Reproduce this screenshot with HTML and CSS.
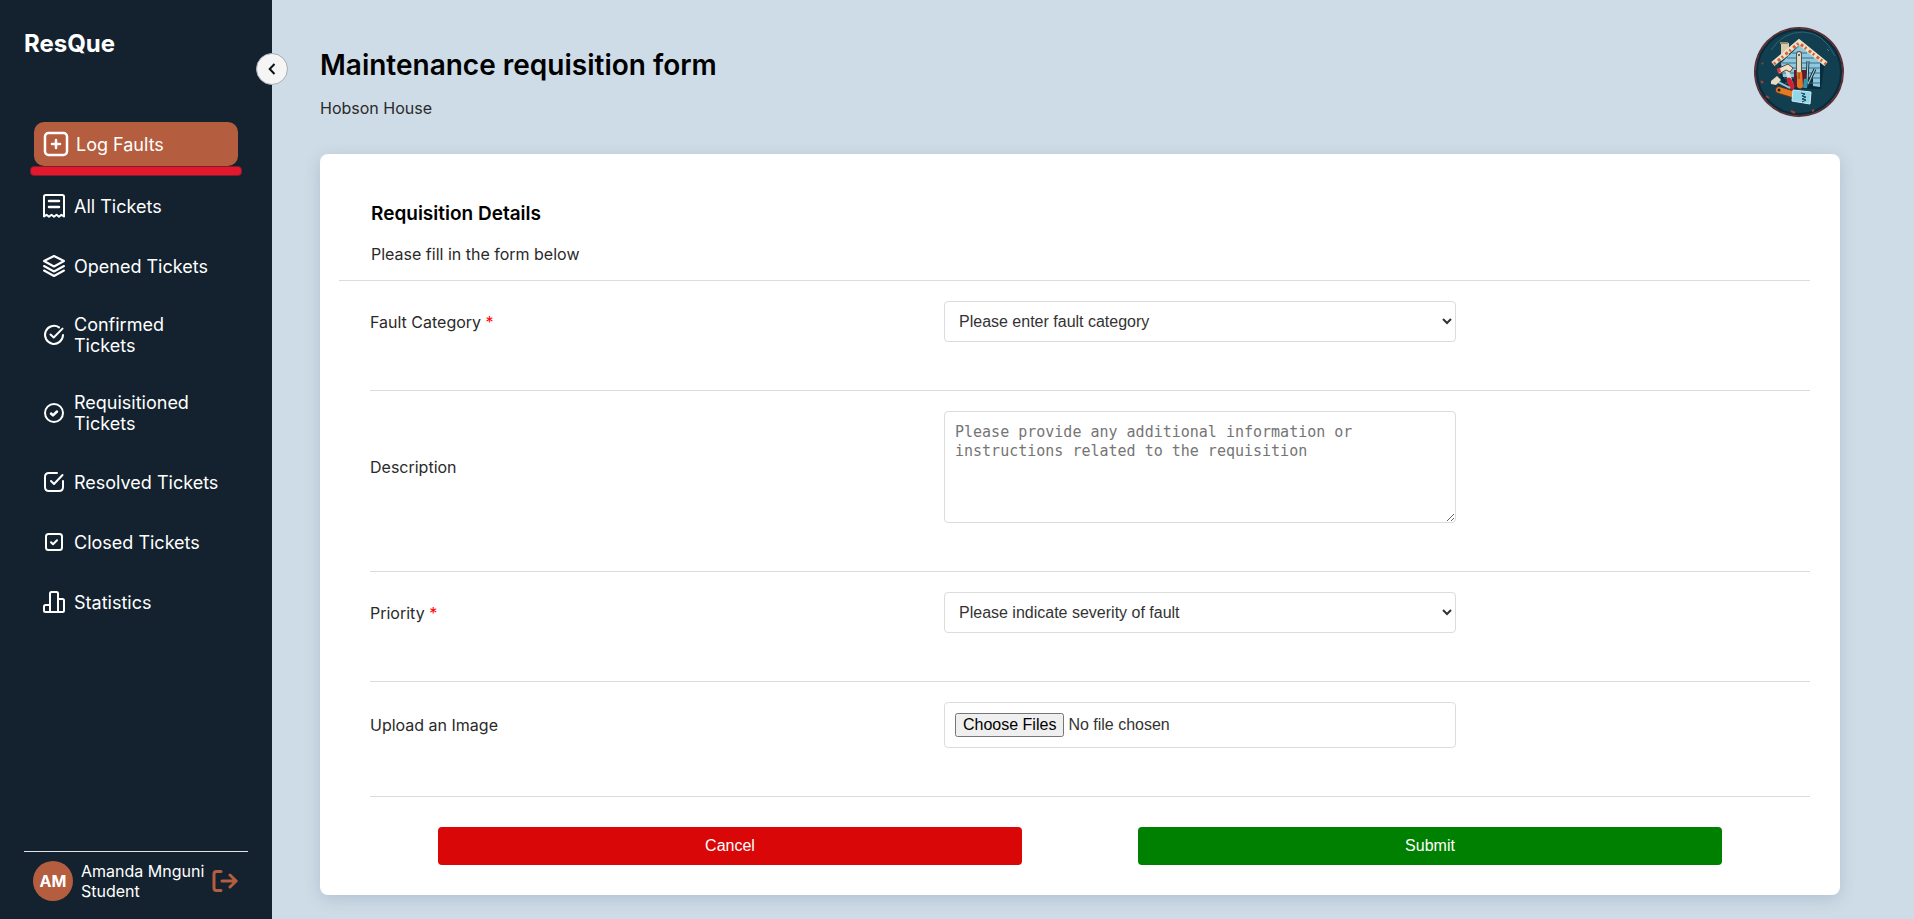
FILE: index.html
```html
<!DOCTYPE html>
<html lang="en">
<head>
<meta charset="utf-8">
<title>ResQue - Maintenance requisition form</title>
<link rel="stylesheet" href="styles.css">
</head>
<body>
<div class="app">
  <aside class="sidebar">
    <div class="brand">ResQue</div>
    <button class="collapse" type="button" aria-label="Collapse sidebar">
      <svg width="16" height="16" viewBox="0 0 16 16" fill="none" stroke="currentColor" stroke-width="2"><path d="M10.500 3 5.700 8l4.800 5"/></svg>
    </button>
    <nav class="nav">
      <a class="nav-item active" href="#">
        <svg class="icon-large" viewBox="0 0 28 28"><rect x="3" y="3" width="22" height="22" rx="3.500"/><path d="M14 10v8M10 14h8"/></svg>
        <span>Log Faults</span>
      </a>
      <a class="nav-item" href="#">
        <svg viewBox="0 0 24 24"><path d="M2 22.500V2.800Q2 1 3.800 1h16.400Q22 1 22 2.800v19.700l-2.500-1.700L17 22.700l-2.500-1.900-2.500 1.900-2.500-1.900L7 22.700l-2.500-1.900z"/><path d="M7 7h10M7 13h10" stroke-width="2.500"/></svg>
        <span>All Tickets</span>
      </a>
      <a class="nav-item" href="#">
        <svg viewBox="0 0 24 24"><path d="M12 2 22 7l-10 5.500L2 7z"/><path d="m2 12 10 5.500L22 12M2 16.500 12 22l10-5.500"/></svg>
        <span>Opened Tickets</span>
      </a>
      <a class="nav-item" href="#">
        <svg viewBox="0 0 24 24"><path d="M17 4.400A9 9 0 1 0 21 12"/><path d="m8.500 11.500 3.200 3L20.500 5.600"/></svg>
        <span>Confirmed Tickets</span>
      </a>
      <a class="nav-item" href="#">
        <svg viewBox="0 0 24 24"><circle cx="12" cy="12" r="9"/><path d="m9 12.500 2 1.900 4-3.900" stroke-width="2.500"/></svg>
        <span>Requisitioned Tickets</span>
      </a>
      <a class="nav-item" href="#">
        <svg viewBox="0 0 24 24"><path d="M15 3H7Q3 3 3 7v10q0 4 4 4h10q4 0 4-4v-6"/><path d="m9 11 3 3 8.500-9"/></svg>
        <span>Resolved Tickets</span>
      </a>
      <a class="nav-item" href="#">
        <svg viewBox="0 0 24 24"><rect x="4" y="4" width="16" height="16" rx="2.500"/><path d="m9 12.300 2 2 4-4"/></svg>
        <span>Closed Tickets</span>
      </a>
      <a class="nav-item" href="#">
        <svg viewBox="0 0 24 24"><path d="M8 22V3.500Q8 2 9.500 2h5Q16 2 16 3.500V22M16 9h4.500Q22 9 22 10.500v10q0 1.500-1.500 1.500h-17Q2 22 2 20.500v-4Q2 15 3.500 15H8"/></svg>
        <span>Statistics</span>
      </a>
    </nav>
    <div class="account">
      <span class="avatar">AM</span>
      <span class="who">Amanda Mnguni<br>Student</span>
      <button class="logout" type="button" aria-label="Log out">
        <svg width="26" height="24" viewBox="1 0 26 24" fill="none" stroke="currentColor" stroke-width="3" stroke-linecap="round" stroke-linejoin="round"><path d="M10 2.500H5.500Q3 2.500 3 5v14q0 2.500 2.500 2.500H10M11 12h14M19 6l6.200 6-6.200 6"/></svg>
      </button>
    </div>
  </aside>

  <main class="main">
    <header class="page-head">
      <div>
        <h1>Maintenance requisition form</h1>
        <p>Hobson House</p>
      </div>
      <svg class="badge" viewBox="0 0 92 92" role="img" aria-label="House of tools logo">
        <circle cx="46" cy="46" r="45" fill="#542f36"/>
        <circle cx="46" cy="46" r="43.500" fill="none" stroke="#783b3a" stroke-width="1" stroke-dasharray="9 3 4 7"/>
        <circle cx="46" cy="46" r="42" fill="#123f50" stroke="#092b3b" stroke-width="2"/>
        <path d="M18 24Q30 6 50 6T82 30" fill="none" stroke="#2a6477" stroke-width="1"/>
        <path d="M25 42 47 22l24 18-3 23H31z" fill="#082c3c"/>
        <path d="M28 17h8v12l-8 6z" fill="#d7cba9"/><path d="M27 17h8" stroke="#9c8b6d" stroke-width="2"/>
        <path d="m28 37 19-18 20 17v25l-7-1v-9H30z" fill="#8dc8de"/>
        <path d="M39 27h15M34 32h27M29 37h38M28 42h39M28 47h39M31 52h36M32 57h35" stroke="#386f86" stroke-width="1"/>
        <path d="M41 44h12v17H41z" fill="#65182b"/>
        <path d="M20 38 46 16l27 22" fill="none" stroke="#ece1ca" stroke-width="5"/>
        <path d="m21 38 25-21 27 21" fill="none" stroke="#d86137" stroke-width="3" stroke-dasharray="2 3 3 2"/>
        <path d="M46 28v20" stroke="#574e46" stroke-width="6" stroke-linecap="round"/>
        <path d="M46 28v20" stroke="#e1dcc4" stroke-width="4" stroke-linecap="round"/><circle cx="46" cy="29" r="1" fill="#344"/>
        <path d="M44 46h5l1 15q-3 3-6 0z" fill="#e27622"/><path d="M46 47v6" stroke="#75401c" stroke-width="1"/>
        <path d="m55 35-1 21M62 43l-8 17" stroke="#183b4c" stroke-width="3"/><path d="m55 35-1 22M62 43l-7 15" stroke="#c4d3cf" stroke-width="1"/>
        <path d="m53 53-1 9" stroke="#3295b2" stroke-width="4"/>
        <path d="m34 44 5 17" stroke="#d4dfd5" stroke-width="4"/><path d="m36 54 3 7" stroke="#d11f35" stroke-width="5" stroke-linecap="round"/>
        <path d="m24 43 11-5 5 4-3 4-4-2-7 4z" fill="#eee1c8" stroke="#664238" stroke-width="1"/><path d="m24 43 3-1 1 4-3 1z" fill="#e03540"/>
        <path d="m25 56 12 6" stroke="#8cc3d2" stroke-width="2"/><path d="m18 55 6-5 4 4-5 5-5-1z" fill="#e8dbc1"/>
        <path d="m26 64 13 4" stroke="#573629" stroke-width="8" stroke-linecap="round"/><path d="m26 64 13 4" stroke="#e47b22" stroke-width="6" stroke-linecap="round"/><circle cx="26" cy="64" r="1.500" fill="#123"/>
        <path d="m40 64 18 2-1 12-18-3z" fill="#91d6e9" stroke="#d3edef" stroke-width="1"/><path d="m48 67 4 1-3 2 4 1-4 2 4 1-4 2" fill="none" stroke="#15394c" stroke-width="1"/>
        <path d="m9 37 1 1M8 55l2 2M13 70l3 2M38 85l4 2M59 85l2-1" stroke="#a34131" stroke-width="2"/><path d="m74 23 2 2" stroke="#44859a"/>
      </svg>
    </header>

    <form class="card">
      <div class="card-head">
        <h2>Requisition Details</h2>
        <p>Please fill in the form below</p>
      </div>
      <div class="rows">
        <div class="row">
          <label for="category">Fault Category <span class="required">*</span></label>
          <select id="category" class="control"><option>Please enter fault category</option></select>
        </div>
        <div class="row">
          <label for="description">Description</label>
          <textarea id="description" class="control" placeholder="Please provide any additional information or instructions related to the requisition"></textarea>
        </div>
        <div class="row">
          <label for="priority">Priority <span class="required">*</span></label>
          <select id="priority" class="control"><option>Please indicate severity of fault</option></select>
        </div>
        <div class="row">
          <label for="images">Upload an Image</label>
          <input id="images" class="control" type="file" multiple>
        </div>
      </div>
      <div class="actions">
        <button class="btn cancel" type="button">Cancel</button>
        <button class="btn submit" type="submit">Submit</button>
      </div>
    </form>
  </main>
</div>
</body>
</html>
```

FILE: styles.css
```css
* { box-sizing: border-box; }
body {
  margin: 0;
  background: #cedce7;
  color: #2a2a2a;
  font: 16px/20px Inter, sans-serif;
}
h1, h2, p { margin: 0; }
.app { display: flex; min-height: 100vh; }

.sidebar {
  position: relative;
  display: flex;
  flex-direction: column;
  flex: 0 0 272px;
  min-width: 0;
  padding: 28px 24px 18px;
  background: #13222e;
  color: #fff;
}
.brand { font-size: 24px; line-height: 32px; font-weight: 700; }
.collapse {
  position: absolute;
  top: 53px;
  right: -16px;
  display: grid;
  place-items: center;
  width: 32px;
  height: 32px;
  padding: 0;
  border: 1px solid #a9adb2;
  border-radius: 50%;
  background: #f5f5f5;
  color: #111;
}
.nav {
  display: flex;
  flex-direction: column;
  gap: 16px;
  margin: 62px 10px 0;
}
.nav-item {
  display: flex;
  align-items: center;
  gap: 8px;
  padding: 10px 8px;
  border-radius: 10px;
  color: #fff;
  font-size: 18px;
  line-height: 21px;
  text-decoration: none;
}
.nav-item svg {
  flex: none;
  width: 24px;
  height: 24px;
  fill: none;
  stroke: currentColor;
  stroke-width: 2;
  stroke-linecap: round;
  stroke-linejoin: round;
}
.nav-item.active {
  position: relative;
  gap: 6px;
  margin-bottom: 2px;
  padding: 8px;
  background: #b55d3f;
}
.nav-item .icon-large { width: 28px; height: 28px; stroke-width: 2.5; }
.nav-item.active::after {
  content: "";
  position: absolute;
  top: 100%;
  left: -4px;
  right: -4px;
  height: 8px;
  border: 1px solid #7d1e2e;
  border-radius: 4px;
  background: #e4182c;
}
.account {
  display: flex;
  align-items: center;
  margin-top: auto;
  padding: 9px 10px 0 9px;
  border-top: 1px solid #dfe3e6;
}
.avatar {
  display: grid;
  place-items: center;
  flex: 0 0 40px;
  height: 40px;
  margin-right: 8px;
  border-radius: 50%;
  background: #b55d3f;
  font-weight: 700;
}
.who { flex: none; white-space: nowrap; }
.logout {
  display: flex;
  margin-left: auto;
  padding: 0;
  border: 0;
  background: none;
  color: #b55d3f;
}

.main { flex: 1; min-width: 0; }
.page-head {
  display: flex;
  justify-content: space-between;
  align-items: flex-start;
  padding: 26px 69px 36px 48px;
}
.page-head h1 {
  margin-top: 21px;
  color: #000;
  font-size: 28px;
  line-height: 36px;
  font-weight: 600;
}
.page-head p { margin-top: 15px; }
.badge { width: 92px; height: 92px; }

.card {
  margin: 0 74px 24px 48px;
  padding: 46px 30px 30px 19px;
  border-radius: 8px;
  background: #fff;
  box-shadow: 0 4px 16px rgba(60, 90, 120, 0.2);
}
.card-head {
  padding: 0 0 16px 32px;
  border-bottom: 1px solid #dcdcdc;
}
.card-head h2 {
  color: #000;
  font-size: 19px;
  line-height: 28px;
  font-weight: 600;
}
.card-head p { margin-top: 16px; }
.rows { margin-left: 31px; }
.row {
  display: grid;
  grid-template-columns: calc(40% - 2px) minmax(0, 512px);
  align-items: center;
  padding: 20px 0 48px;
  border-bottom: 1px solid #dcdcdc;
}
.required { color: #f00; }
.control {
  display: block;
  width: 100%;
  border: 1px solid #dcdcdc;
  border-radius: 4px;
  background: #fff;
  color: #333;
  font: 16px/20px "Liberation Sans", Arial, sans-serif;
}
select.control { height: 41px; padding: 10px; }
textarea.control {
  height: 112px;
  padding: 11px 10px;
  font: 15px/19px "DejaVu Sans Mono", monospace;
  resize: both;
}
textarea.control::placeholder { color: #757575; }
input.control { height: 46px; padding: 10px; }
.actions {
  display: flex;
  justify-content: space-around;
  margin: 30px 30px 0 41px;
}
.btn {
  width: 584px;
  max-width: 48%;
  height: 38px;
  padding: 0;
  border: 0;
  border-radius: 4px;
  color: #fff;
  font: 16px/20px "Liberation Sans", Arial, sans-serif;
}
.cancel { background: #d90707; }
.submit { background: #008000; }
```
